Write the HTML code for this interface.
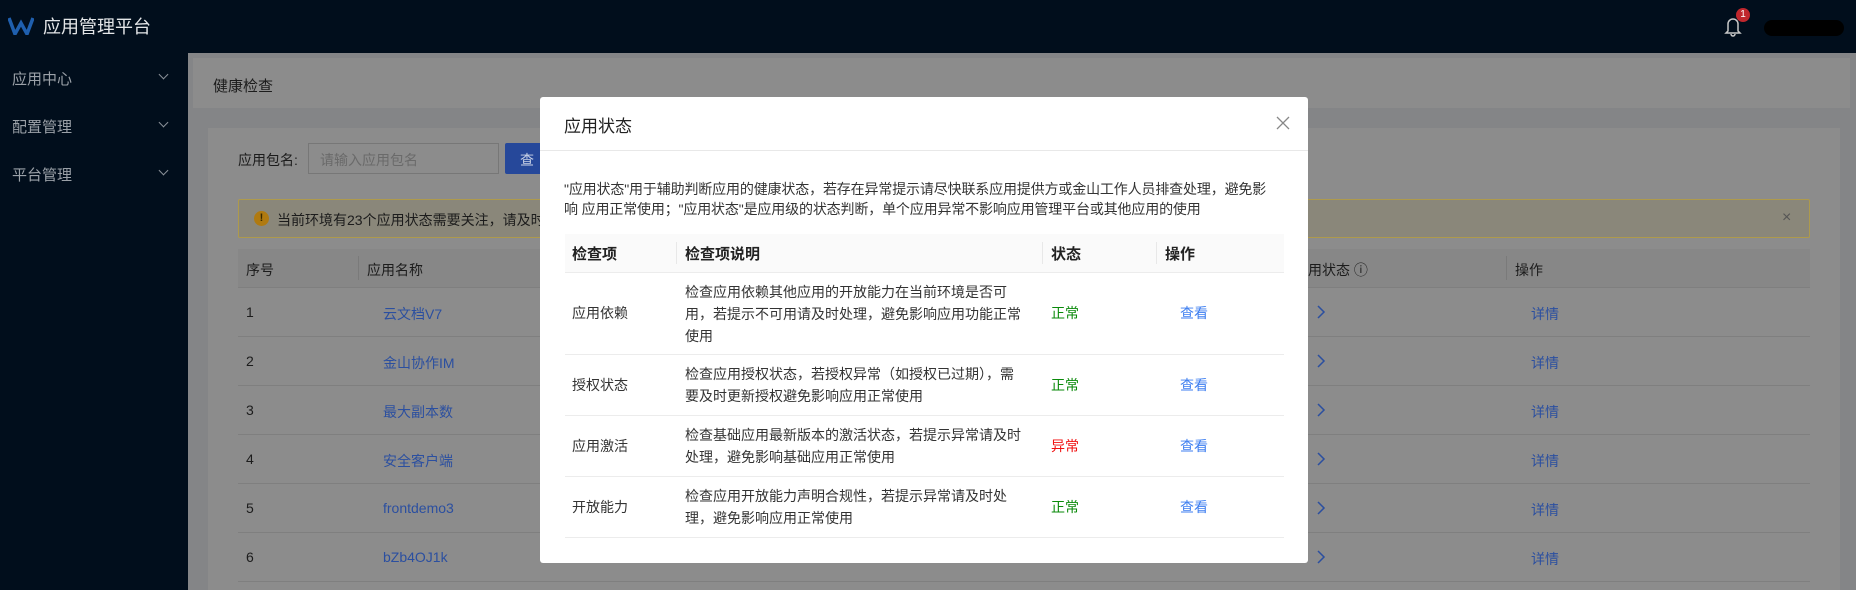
<!DOCTYPE html>
<html><head><meta charset="utf-8">
<style>
*{margin:0;padding:0;box-sizing:border-box}
html,body{width:1856px;height:590px;overflow:hidden}
body{background:#848587;font-family:"Liberation Sans","Noto Sans CJK SC",sans-serif;position:relative}
.abs{position:absolute}
.hdr{left:0;top:0;width:1856px;height:53px;background:#010e1c}
.side{left:0;top:53px;width:188px;height:560px;background:#010e1c}
.si{position:absolute;left:12px;color:#9ba1a8;font-size:15px}
.chev{position:absolute;left:160px;width:7px;height:7px;border-right:1.5px solid #8a9098;border-bottom:1.5px solid #8a9098;transform:rotate(45deg)}
.crumb{left:193px;top:58px;width:1657px;height:50px;background:#8c8c8c}
.card{left:208px;top:128px;width:1632px;height:480px;background:#8c8c8c}
.t{color:#1c1c1c;font-size:14px;position:absolute;white-space:nowrap}
.lk{color:#2b4fa0;font-size:14px;position:absolute;white-space:nowrap}
.rowline{position:absolute;left:238px;width:1572px;height:1px;background:#7f7f7f}
.modal{left:540px;top:97px;width:768px;height:466px;background:#fff;border-radius:3px}
.m{position:absolute;white-space:nowrap;font-size:15px;color:#333}
.hl{position:absolute;left:25px;width:719px;height:1px;background:#ececec}
.arr{position:absolute;left:1316px}
</style></head><body>
<div class="abs hdr"></div>
<svg class="abs" style="left:8px;top:17px" width="26" height="18" viewBox="0 0 26 18"><path d="M1 1 L7 17 L13 6 L19 17 L25 1" fill="none" stroke="#1f5fae" stroke-width="3.5" stroke-linejoin="miter"/></svg>
<div class="abs" style="left:43px;top:13px;color:#e4e6e8;font-size:18px">应用管理平台</div>
<svg class="abs" style="left:1724px;top:15px" width="18" height="22" viewBox="0 0 18 22"><path d="M4 16 V9 a5 5 0 0 1 10 0 V16 L16 18 H2 Z M7 19 a2 2 0 0 0 4 0" fill="none" stroke="#c8c8c8" stroke-width="1.5"/></svg>
<div class="abs" style="left:1736px;top:8px;width:14px;height:14px;border-radius:7px;background:#c0272d;color:#fff;font-size:10px;text-align:center;line-height:14px">1</div>
<div class="abs" style="left:1764px;top:20px;width:80px;height:16px;border-radius:8px;background:#000"></div>
<div class="abs side"></div>
<div class="si" style="top:68px">应用中心</div><div class="chev" style="top:71px"></div>
<div class="si" style="top:116px">配置管理</div><div class="chev" style="top:119px"></div>
<div class="si" style="top:164px">平台管理</div><div class="chev" style="top:167px"></div>
<div class="abs crumb"></div>
<div class="t" style="left:213px;top:75px;font-size:15px">健康检查</div>
<div class="abs card"></div>
<div class="t" style="left:238px;top:150px">应用包名:</div>
<div class="abs" style="left:308px;top:143px;width:191px;height:31px;border:1px solid #777;background:#8c8c8c"></div>
<div class="abs" style="left:320px;top:150px;color:#6a6a6a;font-size:14px">请输入应用包名</div>
<div class="abs" style="left:505px;top:143px;width:60px;height:31px;background:#26489a;border-radius:2px"></div>
<div class="abs" style="left:520px;top:150px;color:#c9d2e6;font-size:14px">查</div>
<div class="abs" style="left:238px;top:199px;width:1572px;height:39px;background:#8a877a;border:1px solid #ae9a4c;border-radius:2px"></div>
<div class="abs" style="left:254px;top:211px;width:15px;height:15px;border-radius:8px;background:#b07a10;color:#3a2a00;font-size:11px;font-weight:bold;text-align:center;line-height:15px">!</div>
<div class="t" style="left:277px;top:210px">当前环境有23个应用状态需要关注，请及时</div>
<div class="t" style="left:1782px;top:209px;color:#555;font-size:16px">×</div>
<div class="abs" style="left:238px;top:249px;width:1572px;height:38px;background:#878787"></div>
<div class="abs" style="left:358px;top:256px;width:1px;height:24px;background:#7a7a7a"></div>
<div class="abs" style="left:1506px;top:256px;width:1px;height:24px;background:#7a7a7a"></div>
<div class="t" style="left:246px;top:260px">序号</div>
<div class="t" style="left:367px;top:260px">应用名称</div>
<div class="t" style="left:1308px;top:260px">用状态 ⓘ</div>
<div class="t" style="left:1515px;top:260px">操作</div>
<div class="rowline" style="top:287px"></div><div class="rowline" style="top:336px"></div><div class="rowline" style="top:385px"></div><div class="rowline" style="top:434px"></div><div class="rowline" style="top:483px"></div><div class="rowline" style="top:532px"></div><div class="rowline" style="top:581px"></div>
<div class="t" style="left:246px;top:304px">1</div><div class="lk" style="left:383px;top:304px">云文档V7</div>
<div class="t" style="left:246px;top:353px">2</div><div class="lk" style="left:383px;top:353px">金山协作IM</div>
<div class="t" style="left:246px;top:402px">3</div><div class="lk" style="left:383px;top:402px">最大副本数</div>
<div class="t" style="left:246px;top:451px">4</div><div class="lk" style="left:383px;top:451px">安全客户端</div>
<div class="t" style="left:246px;top:500px">5</div><div class="lk" style="left:383px;top:500px">frontdemo3</div>
<div class="t" style="left:246px;top:549px">6</div><div class="lk" style="left:383px;top:549px">bZb4OJ1k</div>
<svg class="arr" style="top:305px" width="10" height="14" viewBox="0 0 10 14"><path d="M2 1 L8 7 L2 13" fill="none" stroke="#2b4fa0" stroke-width="1.5"/></svg>
<svg class="arr" style="top:354px" width="10" height="14" viewBox="0 0 10 14"><path d="M2 1 L8 7 L2 13" fill="none" stroke="#2b4fa0" stroke-width="1.5"/></svg>
<svg class="arr" style="top:403px" width="10" height="14" viewBox="0 0 10 14"><path d="M2 1 L8 7 L2 13" fill="none" stroke="#2b4fa0" stroke-width="1.5"/></svg>
<svg class="arr" style="top:452px" width="10" height="14" viewBox="0 0 10 14"><path d="M2 1 L8 7 L2 13" fill="none" stroke="#2b4fa0" stroke-width="1.5"/></svg>
<svg class="arr" style="top:501px" width="10" height="14" viewBox="0 0 10 14"><path d="M2 1 L8 7 L2 13" fill="none" stroke="#2b4fa0" stroke-width="1.5"/></svg>
<svg class="arr" style="top:550px" width="10" height="14" viewBox="0 0 10 14"><path d="M2 1 L8 7 L2 13" fill="none" stroke="#2b4fa0" stroke-width="1.5"/></svg>
<div class="lk" style="left:1531px;top:304px">详情</div>
<div class="lk" style="left:1531px;top:353px">详情</div>
<div class="lk" style="left:1531px;top:402px">详情</div>
<div class="lk" style="left:1531px;top:451px">详情</div>
<div class="lk" style="left:1531px;top:500px">详情</div>
<div class="lk" style="left:1531px;top:549px">详情</div>

<div class="abs modal">
<div class="m" style="left:24px;top:15px;font-size:17px;color:#222">应用状态</div>
<svg style="position:absolute;left:736px;top:19px" width="14" height="14" viewBox="0 0 14 14"><path d="M1 1 L13 13 M13 1 L1 13" stroke="#888" stroke-width="1.3"/></svg>
<div style="position:absolute;left:0;top:53px;width:768px;height:1px;background:#e8e8e8"></div>
<div class="m" style="left:24px;top:82px;line-height:20px;font-size:14px;letter-spacing:-0.15px">"应用状态"用于辅助判断应用的健康状态，若存在异常提示请尽快联系应用提供方或金山工作人员排查处理，避免影<br>响 应用正常使用；"应用状态"是应用级的状态判断，单个应用异常不影响应用管理平台或其他应用的使用</div>
<div style="position:absolute;left:25px;top:137px;width:719px;height:38px;background:#fafafa"></div>
<div style="position:absolute;left:136px;top:145px;width:1px;height:22px;background:#e8e8e8"></div>
<div style="position:absolute;left:502px;top:145px;width:1px;height:22px;background:#e8e8e8"></div>
<div style="position:absolute;left:616px;top:145px;width:1px;height:22px;background:#e8e8e8"></div>
<div class="m" style="left:32px;top:146px;font-weight:bold;color:#222">检查项</div>
<div class="m" style="left:145px;top:146px;font-weight:bold;color:#222">检查项说明</div>
<div class="m" style="left:511px;top:146px;font-weight:bold;color:#222">状态</div>
<div class="m" style="left:625px;top:146px;font-weight:bold;color:#222">操作</div>
<div class="hl" style="top:175px"></div>
<div class="hl" style="top:257px"></div>
<div class="hl" style="top:318px"></div>
<div class="hl" style="top:379px"></div>
<div class="hl" style="top:440px"></div>
<div class="m" style="left:32px;top:206px;font-size:14px">应用依赖</div>
<div class="m" style="left:145px;top:184px;font-size:14px;line-height:22px">检查应用依赖其他应用的开放能力在当前环境是否可<br>用，若提示不可用请及时处理，避免影响应用功能正常<br>使用</div>
<div class="m" style="left:511px;top:206px;font-size:14px;color:#0a8a0a">正常</div>
<div class="m" style="left:640px;top:206px;font-size:14px;color:#3d7ef0">查看</div>
<div class="m" style="left:32px;top:278px;font-size:14px">授权状态</div>
<div class="m" style="left:145px;top:266px;font-size:14px;line-height:22px">检查应用授权状态，若授权异常（如授权已过期），需<br>要及时更新授权避免影响应用正常使用</div>
<div class="m" style="left:511px;top:278px;font-size:14px;color:#0a8a0a">正常</div>
<div class="m" style="left:640px;top:278px;font-size:14px;color:#3d7ef0">查看</div>
<div class="m" style="left:32px;top:339px;font-size:14px">应用激活</div>
<div class="m" style="left:145px;top:327px;font-size:14px;line-height:22px">检查基础应用最新版本的激活状态，若提示异常请及时<br>处理，避免影响基础应用正常使用</div>
<div class="m" style="left:511px;top:339px;font-size:14px;color:#f01010">异常</div>
<div class="m" style="left:640px;top:339px;font-size:14px;color:#3d7ef0">查看</div>
<div class="m" style="left:32px;top:400px;font-size:14px">开放能力</div>
<div class="m" style="left:145px;top:388px;font-size:14px;line-height:22px">检查应用开放能力声明合规性，若提示异常请及时处<br>理，避免影响应用正常使用</div>
<div class="m" style="left:511px;top:400px;font-size:14px;color:#0a8a0a">正常</div>
<div class="m" style="left:640px;top:400px;font-size:14px;color:#3d7ef0">查看</div>
</div>
</body></html>
